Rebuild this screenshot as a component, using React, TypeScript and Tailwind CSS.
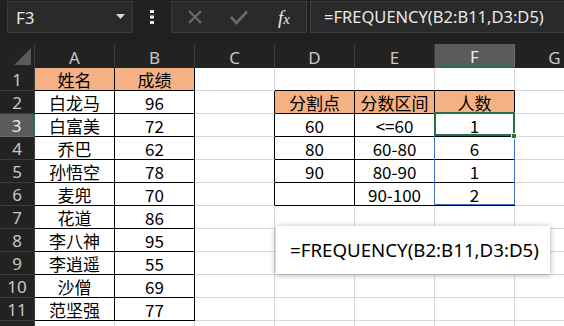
import React from "react";

const COLS = ["A", "B", "C", "D", "E", "F", "G"];

const data: Record<string, string> = {
  "1-0": "姓名", "1-1": "成绩",
  "2-0": "白龙马", "2-1": "96",
  "3-0": "白富美", "3-1": "72",
  "4-0": "乔巴", "4-1": "62",
  "5-0": "孙悟空", "5-1": "78",
  "6-0": "麦兜", "6-1": "70",
  "7-0": "花道", "7-1": "86",
  "8-0": "李八神", "8-1": "95",
  "9-0": "李逍遥", "9-1": "55",
  "10-0": "沙僧", "10-1": "69",
  "11-0": "范坚强", "11-1": "77",
  "2-3": "分割点", "2-4": "分数区间", "2-5": "人数",
  "3-3": "60", "3-4": "<=60", "3-5": "1",
  "4-3": "80", "4-4": "60-80", "4-5": "6",
  "5-3": "90", "5-4": "80-90", "5-5": "1",
  "6-4": "90-100", "6-5": "2",
};

function inTable(r: number, c: number) {
  return (c >= 0 && c <= 1 && r >= 1 && r <= 11) || (c >= 3 && c <= 5 && r >= 2 && r <= 6);
}
function isOrange(r: number, c: number) {
  return (r === 1 && c <= 1) || (r === 2 && c >= 3 && c <= 5);
}

function Cell({ r, c }: { r: number; c: number }) {
  const rb = inTable(r, c) || inTable(r, c + 1);
  const bb = inTable(r, c) || inTable(r + 1, c);
  const txt = data[`${r}-${c}`] ?? "";
  return (
    <div
      className={[
        "flex items-center justify-center border-r border-b text-[17px] leading-none text-black overflow-hidden whitespace-nowrap pt-[1px]",
        rb ? "border-r-black" : "border-r-[#d9d9d9]",
        bb ? "border-b-black" : "border-b-[#d9d9d9]",
        isOrange(r, c) ? "bg-[#f4b183]" : "bg-white",
      ].join(" ")}
      style={{ fontFamily: '"Noto Sans CJK SC", "Noto Sans", sans-serif' }}
    >
      {txt}
    </div>
  );
}

export default function App() {
  const rows = Array.from({ length: 12 }, (_, i) => i + 1);
  return (
    <div
      className="w-[564px] h-[326px] overflow-hidden bg-[#202020] flex flex-col"
      style={{ fontFamily: '"Noto Sans", "Noto Sans CJK SC", sans-serif' }}
    >
      {/* Formula bar */}
      <div className="h-[44px] shrink-0 flex items-start pt-[1px] pl-[7px]">
        <div className="w-[126px] h-[32px] bg-[#2a2a2a] border border-[#3c3c3c] flex items-center pl-[8px] pr-[7px]">
          <span className="text-[17px] text-[#e6e6e6] leading-none">F3</span>
          <span className="ml-auto">
            <svg width="9" height="6" viewBox="0 0 9 6">
              <path d="M0 0 L9 0 L4.5 5 Z" fill="#d8d8d8" />
            </svg>
          </span>
        </div>
        <div className="w-[38px] h-[32px] flex items-center justify-center">
          <svg width="4" height="14" viewBox="0 0 4 14">
            <rect x="0" y="0" width="4" height="3" fill="#f0f0f0" />
            <rect x="0" y="5.5" width="4" height="3" fill="#f0f0f0" />
            <rect x="0" y="11" width="4" height="3" fill="#f0f0f0" />
          </svg>
        </div>
        <div className="w-[136px] h-[32px] bg-[#2a2a2a] border border-[#3c3c3c] flex items-center">
          <div className="w-[44px] flex justify-center pl-[1px]">
            <svg width="16" height="16" viewBox="0 0 16 16">
              <path d="M2 2 L14 14 M14 2 L2 14" stroke="#6a6a6a" strokeWidth="2.2" />
            </svg>
          </div>
          <div className="w-[46px] flex justify-center">
            <svg width="18" height="15" viewBox="0 0 18 15">
              <path d="M1 7 L6.5 13 L17 1.5" stroke="#6a6a6a" strokeWidth="2.6" fill="none" />
            </svg>
          </div>
          <div className="w-[44px] flex justify-center">
            <span
              className="italic text-[19px] text-[#e8e8e8] leading-none"
              style={{ fontFamily: '"Liberation Serif", serif' }}
            >
              f<span className="text-[15px]">x</span>
            </span>
          </div>
        </div>
        <div className="ml-[3px] flex-1 h-[32px] bg-[#2a2a2a] border border-[#3c3c3c] border-r-0 flex items-center pl-[13px]">
          <span className="text-[16.5px] text-[#e8e8e8] leading-none whitespace-nowrap">
            =FREQUENCY(B2:B11,D3:D5)
          </span>
        </div>
      </div>

      {/* Sheet */}
      <div className="relative flex-1 overflow-hidden">
        <div className="grid grid-cols-[35px_80px_80px_80px_80px_80px_80px_80px] grid-rows-[24px_repeat(12,23px)] w-[595px]">
          {/* Column header row */}
          <div className="bg-[#222222] border-r border-[#3c3c3c] flex items-end justify-end pr-[3px] pb-[3px]">
            <svg width="17" height="17" viewBox="0 0 17 17">
              <path d="M17 0 L17 17 L0 17 Z" fill="#5a5a5a" />
            </svg>
          </div>
          {COLS.map((c, i) =>
            i === 5 ? (
              <div
                key={c}
                className="bg-[#5b5b5b] border-r border-[#6c6c6c] border-b-2 border-b-[#217346] flex items-center justify-center text-[17px] text-[#ececec] leading-none pt-[2px]"
              >
                {c}
              </div>
            ) : (
              <div
                key={c}
                className="bg-[#222222] border-r border-[#3c3c3c] flex items-center justify-center text-[17px] text-[#c8c8c8] leading-none pt-[3px]"
              >
                {c}
              </div>
            )
          )}
          {rows.map((r) => (
            <React.Fragment key={r}>
              {r === 3 ? (
                <div className="bg-[#5b5b5b] border-b border-[#6c6c6c] border-r-2 border-r-[#217346] flex items-center justify-center text-[17px] text-[#ececec] leading-none">
                  {r}
                </div>
              ) : (
                <div className="bg-[#222222] border-b border-[#3c3c3c] border-r border-r-[#3c3c3c] flex items-center justify-center text-[17px] text-[#c8c8c8] leading-none">
                  {r <= 11 ? r : ""}
                </div>
              )}
              {COLS.map((_, c) => (
                <Cell key={c} r={r} c={c} />
              ))}
            </React.Fragment>
          ))}
        </div>

        {/* Spill range highlight F3:F6 */}
        <div className="absolute left-[434px] top-[68px] w-[81px] h-[93px] border border-[#4472c4] pointer-events-none" />
        {/* Active cell F3 */}
        <div className="absolute left-[434px] top-[68px] w-[81px] h-[24px] border-2 border-[#217346] pointer-events-none" />
        <div className="absolute left-[511px] top-[89px] w-[6px] h-[6px] bg-[#217346] border border-white pointer-events-none" />

        {/* Formula callout */}
        <div className="absolute left-[276px] top-[182px] w-[274px] h-[48px] bg-white shadow-[0_1px_6px_rgba(0,0,0,0.35)] flex items-center pl-[14px]">
          <span className="text-[18.7px] text-black leading-none whitespace-nowrap">
            =FREQUENCY(B2:B11,D3:D5)
          </span>
        </div>
      </div>
    </div>
  );
}
